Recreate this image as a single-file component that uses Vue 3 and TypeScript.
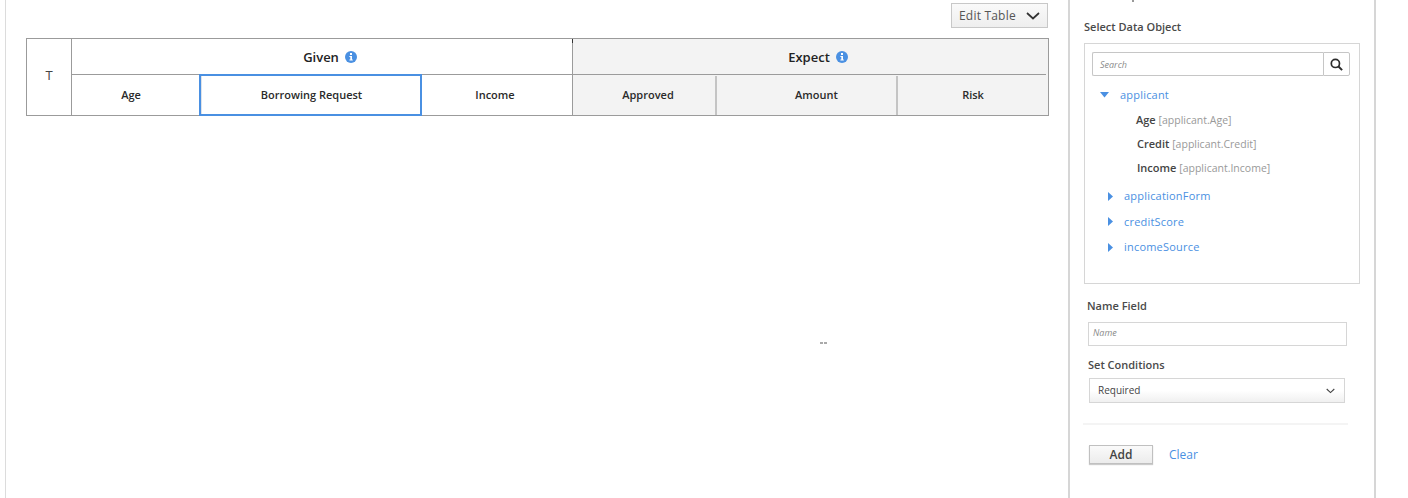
<script setup lang="ts">
const fields = [
  { name: 'Age', path: '[applicant.Age]' },
  { name: 'Credit', path: '[applicant.Credit]' },
  { name: 'Income', path: '[applicant.Income]' },
]
const closed = ['applicationForm', 'creditScore', 'incomeSource']
</script>

<template>
  <div class="page">
    <main class="main">
      <div class="toolbar">
        <button class="edit-btn">
          <span>Edit Table</span>
          <svg width="14" height="8" viewBox="0 0 14 8"><path d="M1 1l6 5.5L13 1" fill="none" stroke="#333" stroke-width="1.7" /></svg>
        </button>
      </div>
      <div class="table">
        <div class="t-col">T</div>
        <div class="given">
          <div class="group-title given-title">
            <span>Given</span>
            <svg class="info" width="12" height="12" viewBox="0 0 12 12"><circle cx="6" cy="6" r="6" fill="#4a90e2" /><rect x="5" y="2" width="2" height="2" fill="#fff" /><path d="M4.4 5h2.6v3.4h.8v1H4.4v-1h.9V6h-.9z" fill="#fff" /></svg>
          </div>
          <div class="cells">
            <div class="cell age">Age</div>
            <div class="cell borrow">Borrowing Request</div>
            <div class="cell income">Income</div>
          </div>
        </div>
        <div class="expect">
          <div class="group-title expect-title">
            <span>Expect</span>
            <svg class="info" width="12" height="12" viewBox="0 0 12 12"><circle cx="6" cy="6" r="6" fill="#4a90e2" /><rect x="5" y="2" width="2" height="2" fill="#fff" /><path d="M4.4 5h2.6v3.4h.8v1H4.4v-1h.9V6h-.9z" fill="#fff" /></svg>
          </div>
          <div class="cells">
            <div class="cell approved">Approved</div>
            <div class="cell amount">Amount</div>
            <div class="cell risk">Risk</div>
          </div>
        </div>
      </div>
      <div class="dots"></div>
    </main>

    <aside class="side">
      <div class="label select-label">Select Data Object</div>
      <div class="tree-box">
        <div class="search">
          <div class="search-input">Search</div>
          <div class="search-btn">
            <svg width="13" height="13" viewBox="0 0 13 13"><circle cx="5.4" cy="5.4" r="4.1" fill="none" stroke="#2b2b2b" stroke-width="1.7" /><path d="M8.5 8.5l3.6 3.6" stroke="#2b2b2b" stroke-width="2" /></svg>
          </div>
        </div>
        <div class="node open">
          <svg width="9" height="6" viewBox="0 0 9 6"><path d="M0 0h9L4.5 5.5z" fill="#4a90e2" /></svg>
          <span>applicant</span>
        </div>
        <div v-for="f in fields" :key="f.name" class="field">
          <b>{{ f.name }}</b> <span>{{ f.path }}</span>
        </div>
        <div v-for="c in closed" :key="c" class="node shut">
          <svg width="5" height="9" viewBox="0 0 5 9"><path d="M0 0l5 4.5L0 9z" fill="#4a90e2" /></svg>
          <span>{{ c }}</span>
        </div>
      </div>

      <div class="label name-label">Name Field</div>
      <div class="name-input">Name</div>
      <div class="label cond-label">Set Conditions</div>
      <div class="select">
        <span class="select-text">Required</span>
        <svg width="9" height="6" viewBox="0 0 9 6"><path d="M.7 1l3.8 3.6L8.3 1" fill="none" stroke="#444" stroke-width="1.1" /></svg>
      </div>
      <div class="divider"></div>
      <div class="actions">
        <button class="add">Add</button>
        <a class="clear">Clear</a>
      </div>
    </aside>
  </div>
</template>

<style>
html, body { margin: 0; background: #fff; }
</style>

<style scoped>
.page {
  width: 1408px;
  height: 498px;
  overflow: hidden;
  box-sizing: border-box;
  padding-left: 5px;
  display: flex;
  font-family: "Open Sans", "Liberation Sans", sans-serif;
  color: #222;
  background: #fff;
}
.main {
  width: 1063px;
  height: 498px;
  box-sizing: border-box;
  border-left: 1px solid #dcdcdc;
  padding: 3px 0 0 20px;
  flex: none;
}
.toolbar { display: flex; justify-content: flex-end; width: 1022px; height: 35px; }
.edit-btn {
  width: 97px;
  height: 25px;
  box-sizing: border-box;
  border: 1px solid #c8c8c8;
  background: linear-gradient(#fafafa, #eeeeee);
  font: 12px "Open Sans", sans-serif;
  color: #555;
  display: flex;
  align-items: center;
  justify-content: space-between;
  padding: 0 7px 0 7px;
  letter-spacing: .2px;
}
.table {
  width: 1023px;
  height: 78px;
  box-sizing: border-box;
  border: 1px solid #9b9b9b;
  display: flex;
}
.t-col {
  width: 45px;
  flex: none;
  box-sizing: border-box;
  border-right: 1px solid #9b9b9b;
  display: flex;
  align-items: center;
  justify-content: center;
  font-size: 13px;
  color: #444;
  padding-bottom: 4px;
}
.given { width: 500px; flex: none; }
.expect {
  flex: 1;
  background: #f3f3f3;
  border-left: 1px solid #9b9b9b;
  position: relative;
}
.expect::before {
  content: "";
  position: absolute;
  left: -1px;
  top: 0;
  width: 1px;
  height: 4px;
  background: #333;
}
.group-title {
  height: 36px;
  box-sizing: border-box;
  border-bottom: 1px solid #9b9b9b;
  display: flex;
  align-items: center;
  justify-content: center;
  gap: 6px;
  font-size: 13px;
  font-weight: 600;
  color: #222;
}
.given-title { padding-left: 16px; }
.expect-title { margin-right: 2px; padding-left: 17px; gap: 6px; }
.cells { display: flex; height: 40px; }
.cell {
  display: flex;
  align-items: center;
  justify-content: center;
  font-size: 11px;
  font-weight: 600;
  color: #2a2a2a;
  box-sizing: border-box;
  padding-bottom: 2px;
}
.age { width: 128px; padding-right: 10px; }
.borrow {
  width: 223px;
  height: 42px;
  flex: none;
  margin: -1px 0 0 -1px;
  border: 2px solid #4a90e2;
  padding: 0 0 2px 2px;
  position: relative;
  z-index: 1;
}
.borrow::before {
  content: "";
  position: absolute;
  left: 0;
  top: 0;
  bottom: 0;
  width: 1px;
  background: #dfe3e8;
}
.income { width: 150px; padding-right: 4px; }
.approved { width: 144px; border-right: 2px solid #c4c4c4; padding-left: 8px; margin-top: 1px; }
.amount { width: 181px; border-right: 2px solid #c4c4c4; padding-left: 20px; margin-top: 1px; }
.risk { flex: 1; margin-top: 1px; }
.approved, .amount, .risk { padding-bottom: 3px; }
.dots {
  width: 7px;
  height: 2px;
  margin: 226px 0 0 794px;
  background: linear-gradient(90deg, #aaa 0 3px, transparent 3px 4px, #aaa 4px 7px);
}
.side {
  width: 308px;
  height: 498px;
  box-sizing: border-box;
  flex: none;
  border-left: 2px solid #d6d6d6;
  border-right: 2px solid #d6d6d6;
  padding: 0 0 0 14px;
  position: relative;
}
.side::before {
  content: "";
  position: absolute;
  left: 62px;
  top: 0;
  width: 2px;
  height: 2px;
  background: #999;
}
.label { font-size: 11px; font-weight: 600; color: #4a4a4a; line-height: 15px; }
.select-label { margin-top: 19px; }
.tree-box {
  width: 276px;
  height: 241px;
  box-sizing: border-box;
  border: 1px solid #d6d6d6;
  margin-top: 9px;
  padding: 8px 9px 0 7px;
}
.search { display: flex; height: 24px; }
.search-input {
  flex: 1;
  box-sizing: border-box;
  border: 1px solid #c6c6c6;
  border-right: 0;
  border-radius: 2px 0 0 2px;
  font-size: 9px;
  font-style: italic;
  color: #8a8a8a;
  line-height: 24px;
  padding-left: 7px;
}
.search-btn {
  width: 27px;
  box-sizing: border-box;
  border: 1px solid #c6c6c6;
  border-radius: 0 2px 2px 0;
  display: flex;
  align-items: center;
  justify-content: center;
}
.node { display: flex; align-items: center; font-size: 11px; color: #4a90e2; line-height: 16px; letter-spacing: .2px; }
.open { margin-top: 11px; padding-left: 8px; gap: 11px; margin-bottom: 9px; }
.shut { padding-left: 16px; gap: 11px; margin-bottom: 9.6px; }
.field { font-size: 11px; line-height: 16px; padding-left: 44px; margin-bottom: 8px; color: #999; }
.field + .field { padding-left: 45px; }
.field span { font-size: 10.5px; }
.field b { font-weight: 600; color: #444; }
.field + .shut { margin-top: 12px; }
.name-label { margin: 14px 0 0 3px; }
.name-input {
  width: 259px;
  height: 24px;
  box-sizing: border-box;
  border: 1px solid #d6d6d6;
  margin: 9px 0 0 4px;
  font-size: 9px;
  font-style: italic;
  color: #8a8a8a;
  line-height: 20px;
  padding-left: 4px;
}
.cond-label { margin: 11px 0 0 4px; }
.select {
  width: 256px;
  height: 25px;
  box-sizing: border-box;
  border: 1px solid #d6d6d6;
  background: linear-gradient(#ffffff 50%, #f0f0f0);
  margin: 6px 0 0 5px;
  padding: 0 9px 0 8px;
  display: flex;
  align-items: center;
  justify-content: space-between;
  font-size: 10px;
  font-weight: 500;
  color: #444;
}
.select-text { margin-top: -2px; }
.divider { width: 265px; height: 2px; background: #f4f4f4; margin: 20px 0 0 -1px; }
.actions { display: flex; align-items: center; margin: 20px 0 0 5px; gap: 16px; }
.add {
  width: 64px;
  height: 19px;
  box-sizing: border-box;
  border: 1px solid #c0c0c0;
  background: linear-gradient(#fafafa, #ececec);
  box-shadow: 0 1px 1px #ccc;
  font: 600 12px "Open Sans", sans-serif;
  color: #444;
  padding: 0;
}
.clear { font-size: 12px; color: #4a90e2; }
</style>
